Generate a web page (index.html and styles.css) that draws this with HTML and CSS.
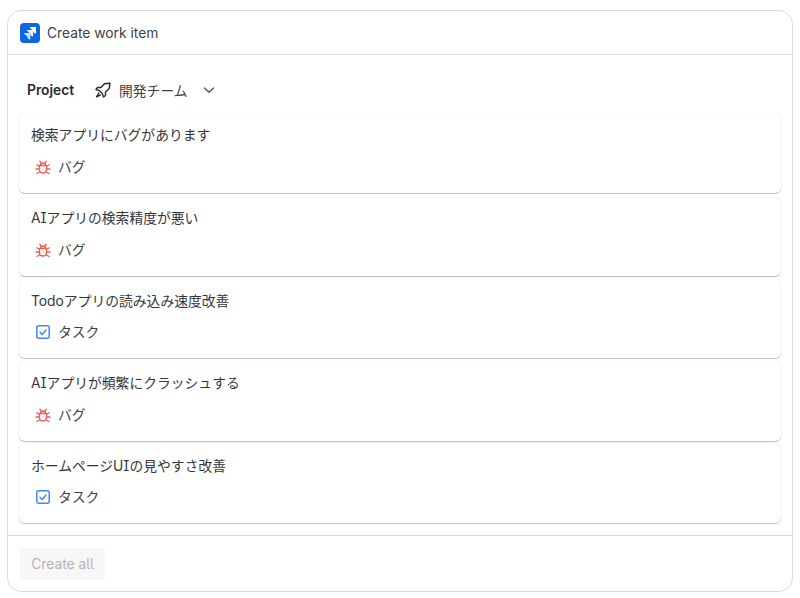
FILE: index.html
```html
<!DOCTYPE html>
<html lang="ja">
<head>
    <meta charset="UTF-8">
    <title>Create work item</title>
    <link rel="stylesheet" href="styles.css">
</head>
<body>
    <div class="panel">
        <header class="panel-head">
            <svg class="logo" viewBox="0 0 20 20" width="20" height="20">
                <rect width="20" height="20" rx="4" fill="#0c66e4"/>
                <path d="M9.500 4H16v6.500c-1.800 0-3-1.200-3-2.900V6.800h-1.200z" fill="#fff"/>
                <path d="M6.600 7h6.500v6.500c-1.800 0-3-1.200-3-2.900V9.800H8.900z" fill="#fff" opacity=".9"/>
                <path d="M3.700 10h6.500v6.500c-1.800 0-3-1.200-3-2.900v-.8H6z" fill="#fff" opacity=".8"/>
            </svg>
            <span>Create work item</span>
        </header>
        <div class="panel-body">
            <div class="project">
                <strong class="project-label">Project</strong>
                <svg class="rocket" viewBox="0 0 16 16" width="16" height="16" fill="none" stroke="#292a2e" stroke-width="1.400" stroke-linejoin="round" stroke-linecap="round">
                    <path d="M15 1.200 9.500 1.800 6 5.500H2.500L1 7.500l3.500 1.200 2.800 2.800 1.200 3.500 2-1.500V10l3.700-3.500z"/>
                    <path d="M3.800 11 1.500 14.800l3.800-1.800"/>
                </svg>
                <span class="project-name">開発チーム</span>
                <svg class="chevron" viewBox="0 0 12 12" width="12" height="12" fill="none" stroke="#505258" stroke-width="1.300" stroke-linecap="round" stroke-linejoin="round">
                    <path d="M1.500 4 6 8.300 10.500 4"/>
                </svg>
            </div>
            <div class="items">
                <div class="item">
                    <div class="item-title">検索アプリにバグがあります</div>
                    <div class="item-type">
                        <svg class="type-icon" viewBox="0 0 16 16" width="16" height="16" fill="none" stroke="#f15b50" stroke-width="1.300" stroke-linecap="round" stroke-linejoin="round"><path d="M4.500 6.500h7v4c0 2-1.500 3.500-3.500 3.500s-3.500-1.500-3.500-3.500zM5.500 6.500C5.500 5 6.500 4 8 4s2.500 1 2.500 2.500M6 4.200 4.800 2.200M10 4.200l1.200-2M4.500 7.500 1.800 5.800M11.500 7.500l2.700-1.700M4.500 10H1M11.500 10H15M5 12.500 2 14.500M11 12.500l3 2"/></svg>
                        <span>バグ</span>
                    </div>
                </div>
                <div class="item">
                    <div class="item-title">AIアプリの検索精度が悪い</div>
                    <div class="item-type">
                        <svg class="type-icon" viewBox="0 0 16 16" width="16" height="16" fill="none" stroke="#f15b50" stroke-width="1.300" stroke-linecap="round" stroke-linejoin="round"><path d="M4.500 6.500h7v4c0 2-1.500 3.500-3.500 3.500s-3.500-1.500-3.500-3.500zM5.500 6.500C5.500 5 6.500 4 8 4s2.500 1 2.500 2.500M6 4.200 4.800 2.200M10 4.200l1.200-2M4.500 7.500 1.800 5.800M11.500 7.500l2.700-1.700M4.500 10H1M11.500 10H15M5 12.500 2 14.500M11 12.500l3 2"/></svg>
                        <span>バグ</span>
                    </div>
                </div>
                <div class="item">
                    <div class="item-title">Todoアプリの読み込み速度改善</div>
                    <div class="item-type">
                        <svg class="type-icon" viewBox="0 0 16 16" width="16" height="16" fill="none" stroke="#4688ec" stroke-width="1.500" stroke-linecap="round" stroke-linejoin="round"><rect x="1.800" y="1.800" width="12.400" height="12.400" rx="2"/><path d="m5 8.200 2.200 2.200L11 6"/></svg>
                        <span>タスク</span>
                    </div>
                </div>
                <div class="item">
                    <div class="item-title">AIアプリが頻繁にクラッシュする</div>
                    <div class="item-type">
                        <svg class="type-icon" viewBox="0 0 16 16" width="16" height="16" fill="none" stroke="#f15b50" stroke-width="1.300" stroke-linecap="round" stroke-linejoin="round"><path d="M4.500 6.500h7v4c0 2-1.500 3.500-3.500 3.500s-3.500-1.500-3.500-3.500zM5.500 6.500C5.500 5 6.500 4 8 4s2.500 1 2.500 2.500M6 4.200 4.800 2.200M10 4.200l1.200-2M4.500 7.500 1.800 5.800M11.500 7.500l2.700-1.700M4.500 10H1M11.500 10H15M5 12.500 2 14.500M11 12.500l3 2"/></svg>
                        <span>バグ</span>
                    </div>
                </div>
                <div class="item">
                    <div class="item-title">ホームページUIの見やすさ改善</div>
                    <div class="item-type">
                        <svg class="type-icon" viewBox="0 0 16 16" width="16" height="16" fill="none" stroke="#4688ec" stroke-width="1.500" stroke-linecap="round" stroke-linejoin="round"><rect x="1.800" y="1.800" width="12.400" height="12.400" rx="2"/><path d="m5 8.200 2.200 2.200L11 6"/></svg>
                        <span>タスク</span>
                    </div>
                </div>
            </div>
        </div>
        <footer class="panel-foot">
            <button type="button" class="create-btn" disabled>Create all</button>
        </footer>
    </div>
</body>
</html>
```

FILE: styles.css
```css
* {
    margin: 0;
    padding: 0;
    box-sizing: border-box;
}

body {
    font-family: Inter, "Noto Sans CJK JP", sans-serif;
    font-size: 13.8px;
    font-feature-settings: "cv08", "ss02";
    color: #292a2e;
    background: #fff;
    padding: 10px 7px 6px;
    height: 598px;
    overflow: hidden;
}

.panel {
    height: 582px;
    border: 1px solid #dcdcdc;
    border-radius: 14px;
    display: flex;
    flex-direction: column;
}

.panel-head {
    height: 44px;
    flex: none;
    display: flex;
    align-items: center;
    gap: 7px;
    padding: 0 12px 0;
    border-bottom: 1px solid #dcdcdc;
    color: #3d3f45;
}

.logo {
    flex: none;
}

.panel-body {
    flex: 1;
    padding: 0 11px;
}

.project {
    height: 58px;
    display: flex;
    align-items: center;
    padding: 12px 0 0 8px;
}

.project-label {
    font-weight: 600;
    width: 68px;
}

.rocket {
    margin-right: 8px;
}

.project-name {
    color: #3d3f45;
    margin-right: 15px;
}

.items {
    display: flex;
    flex-direction: column;
    gap: 2.6px;
}

.item {
    height: 80px;
    padding: 11.4px 12px 0;
    background: #fff;
    border-radius: 6px;
    box-shadow: 0 1px 1px #bdbdbd, 0 0 1px #dedede;
}

.item-title {
    line-height: 22px;
    color: #34363b;
}

.item-type {
    display: flex;
    align-items: center;
    gap: 7px;
    margin-top: 9.65px;
    padding-left: 4px;
    line-height: 22px;
    color: #3d3f45;
}

.type-icon {
    flex: none;
}

.panel-foot {
    height: 56px;
    flex: none;
    padding: 12px 12px 0;
    border-top: 1px solid #dcdcdc;
}

.create-btn {
    width: 85px;
    height: 32px;
    border: none;
    border-radius: 4px;
    background: #f8f6f6;
    color: #b5b6ba;
    font: inherit;
}
```
